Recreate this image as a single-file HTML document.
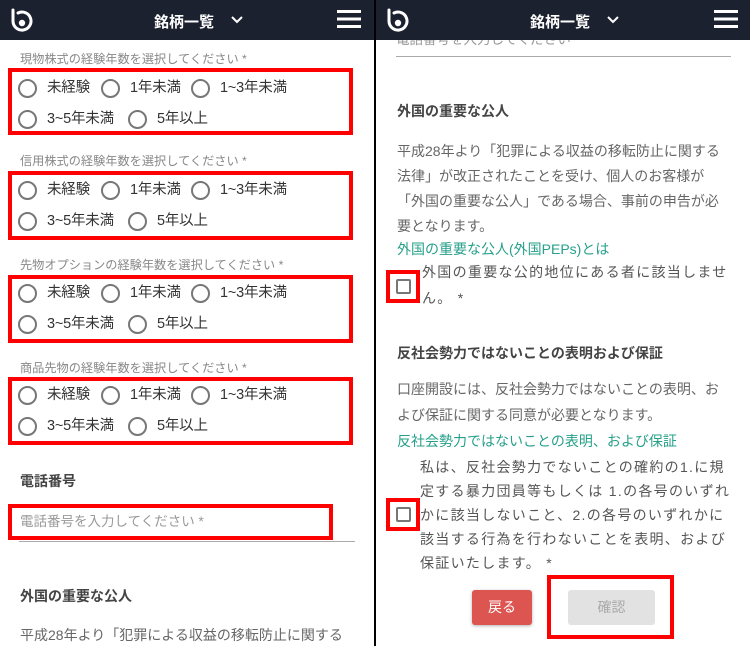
<!DOCTYPE html>
<html><head><meta charset="utf-8"><style>
*{margin:0;padding:0;box-sizing:border-box}
body{width:750px;height:646px;overflow:hidden;background:#fff;position:relative;font-family:"Liberation Sans","Noto Sans CJK JP",sans-serif}
.a{position:absolute;white-space:nowrap}
.hd{position:absolute;top:0;height:40px;background:#1c2130;width:375px}
.ttl{color:#fff;font-size:15px;font-weight:bold;top:11px}
.lbl{font-size:12.2px;color:#888;line-height:16px}
.box{position:absolute;border:4.5px solid #f00}
.r{position:absolute;width:19px;height:19px;border:2px solid #777;border-radius:50%}
.o{font-size:14.5px;color:#333;line-height:18px;letter-spacing:-0.2px}
.h{font-size:14px;font-weight:bold;color:#444;line-height:18px}
.p{font-size:14px;color:#666;line-height:18px}
.g{font-size:14px;color:#26a08a;line-height:18px}
.cb{position:absolute;width:15px;height:15px;border:2px solid #777;border-radius:2px}
.t{font-size:14px;color:#555;line-height:18px;letter-spacing:1.3px}
</style></head><body>
<div class="hd" style="left:0"></div>
<div class="hd" style="left:376px"></div>
<div style="position:absolute;left:374px;top:0;width:2px;height:646px;background:#000"></div>
<svg class="a" style="left:10px;top:8px" width="24" height="26" viewBox="0 0 24 26"><path d="M3 2 V13 A9 9 0 1 0 8 5" fill="none" stroke="#fff" stroke-width="3" stroke-linecap="round"/><circle cx="12" cy="15" r="3.2" fill="#fff"/></svg>
<svg class="a" style="left:386px;top:8px" width="24" height="26" viewBox="0 0 24 26"><path d="M3 2 V13 A9 9 0 1 0 8 5" fill="none" stroke="#fff" stroke-width="3" stroke-linecap="round"/><circle cx="12" cy="15" r="3.2" fill="#fff"/></svg>
<div class="a ttl" style="left:154px">銘柄一覧</div>
<div class="a ttl" style="left:530px">銘柄一覧</div>
<svg class="a" style="left:230px;top:15px" width="14" height="10"><path d="M2 2 L7 7 L12 2" fill="none" stroke="#fff" stroke-width="2"/></svg>
<svg class="a" style="left:606px;top:15px" width="14" height="10"><path d="M2 2 L7 7 L12 2" fill="none" stroke="#fff" stroke-width="2"/></svg>
<svg class="a" style="left:337px;top:10px" width="24" height="18"><rect y="0" width="24" height="3" fill="#fff"/><rect y="7.5" width="24" height="3" fill="#fff"/><rect y="15" width="24" height="3" fill="#fff"/></svg>
<svg class="a" style="left:714px;top:10px" width="24" height="18"><rect y="0" width="24" height="3" fill="#fff"/><rect y="7.5" width="24" height="3" fill="#fff"/><rect y="15" width="24" height="3" fill="#fff"/></svg>

<div class="a lbl" style="left:20px;top:51px">現物株式の経験年数を選択してください *</div>
<div class="box" style="left:8px;top:68px;width:345px;height:67px"></div>
<div class="a lbl" style="left:20px;top:153px">信用株式の経験年数を選択してください *</div>
<div class="box" style="left:8px;top:171px;width:345px;height:69px"></div>
<div class="a lbl" style="left:20px;top:257px">先物オプションの経験年数を選択してください *</div>
<div class="box" style="left:8px;top:275px;width:345px;height:68px"></div>
<div class="a lbl" style="left:20px;top:360px">商品先物の経験年数を選択してください *</div>
<div class="box" style="left:8px;top:377px;width:345px;height:68px"></div>

<div id="rs"></div>
<script>
var tops=[88,190,293,395],h='';
tops.forEach(function(y){
 var y2=y+31;
 [[27,y,'未経験'],[110,y,'1年未満'],[200,y,'1~3年未満'],[27,y2,'3~5年未満'],[137,y2,'5年以上']].forEach(function(r){
  h+='<div class="r" style="left:'+(r[0]-9.5)+'px;top:'+(r[1]-9.5)+'px"></div><div class="a o" style="left:'+(r[0]+20)+'px;top:'+(r[1]-9)+'px">'+r[2]+'</div>';
 });
});
document.getElementById('rs').innerHTML=h;
</script>

<div class="a h" style="left:20px;top:472px">電話番号</div>
<div class="box" style="left:8px;top:504px;width:325px;height:36px"></div>
<div class="a lbl" style="left:20px;top:514px;font-size:13.5px;color:#999">電話番号を入力してください *</div>
<div style="position:absolute;left:19px;top:541px;width:336px;height:1px;background:#aaa"></div>
<div class="a h" style="left:20px;top:587px">外国の重要な公人</div>
<div class="a p" style="left:20px;top:626px">平成28年より「犯罪による収益の移転防止に関する</div>

<div class="a lbl" style="left:396px;top:32px;font-size:13.5px;color:#999;clip-path:inset(8px 0 0 0)">電話番号を入力してください *</div>
<div style="position:absolute;left:396px;top:56px;width:335px;height:1px;background:#aaa"></div>
<div class="a h" style="left:397px;top:102px">外国の重要な公人</div>
<div class="a p" style="left:397px;top:142px">平成28年より「犯罪による収益の移転防止に関する</div>
<div class="a p" style="left:397px;top:167px">法律」が改正されたことを受け、個人のお客様が</div>
<div class="a p" style="left:397px;top:192px">「外国の重要な公人」である場合、事前の申告が必</div>
<div class="a p" style="left:397px;top:217px">要となります。</div>
<div class="a g" style="left:397px;top:240px">外国の重要な公人(外国PEPs)とは</div>
<div class="box" style="left:386px;top:270px;width:34px;height:33px"></div>
<div class="cb" style="left:396px;top:279px"></div>
<div class="a t" style="left:422px;top:263px">外国の重要な公的地位にある者に該当しませ</div>
<div class="a t" style="left:422px;top:289px">ん。 *</div>
<div class="a h" style="left:397px;top:344px">反社会勢力ではないことの表明および保証</div>
<div class="a p" style="left:397px;top:380px">口座開設には、反社会勢力ではないことの表明、お</div>
<div class="a p" style="left:397px;top:406px">よび保証に関する同意が必要となります。</div>
<div class="a g" style="left:397px;top:432px">反社会勢力ではないことの表明、および保証</div>
<div class="a t" style="left:420px;top:458px">私は、反社会勢力でないことの確約の1.に規</div>
<div class="a t" style="left:420px;top:482px">定する暴力団員等もしくは 1.の各号のいずれ</div>
<div class="a t" style="left:420px;top:506px">かに該当しないこと、2.の各号のいずれかに</div>
<div class="a t" style="left:420px;top:530px">該当する行為を行わないことを表明、および</div>
<div class="a t" style="left:420px;top:554px">保証いたします。 *</div>
<div class="box" style="left:386px;top:498px;width:34px;height:33px"></div>
<div class="cb" style="left:396px;top:507px"></div>
<div style="position:absolute;left:472px;top:590px;width:60px;height:35px;background:#dc5550;border-radius:3px;box-shadow:0 1px 3px rgba(0,0,0,.3);color:#fff;font-size:14px;text-align:center;line-height:35px">戻る</div>
<div style="position:absolute;left:568px;top:590px;width:87px;height:35px;background:#e2e2e2;border-radius:3px;color:#aaa;font-size:14px;text-align:center;line-height:35px">確認</div>
<div class="box" style="left:547px;top:575px;width:127px;height:64px"></div>
</body></html>
